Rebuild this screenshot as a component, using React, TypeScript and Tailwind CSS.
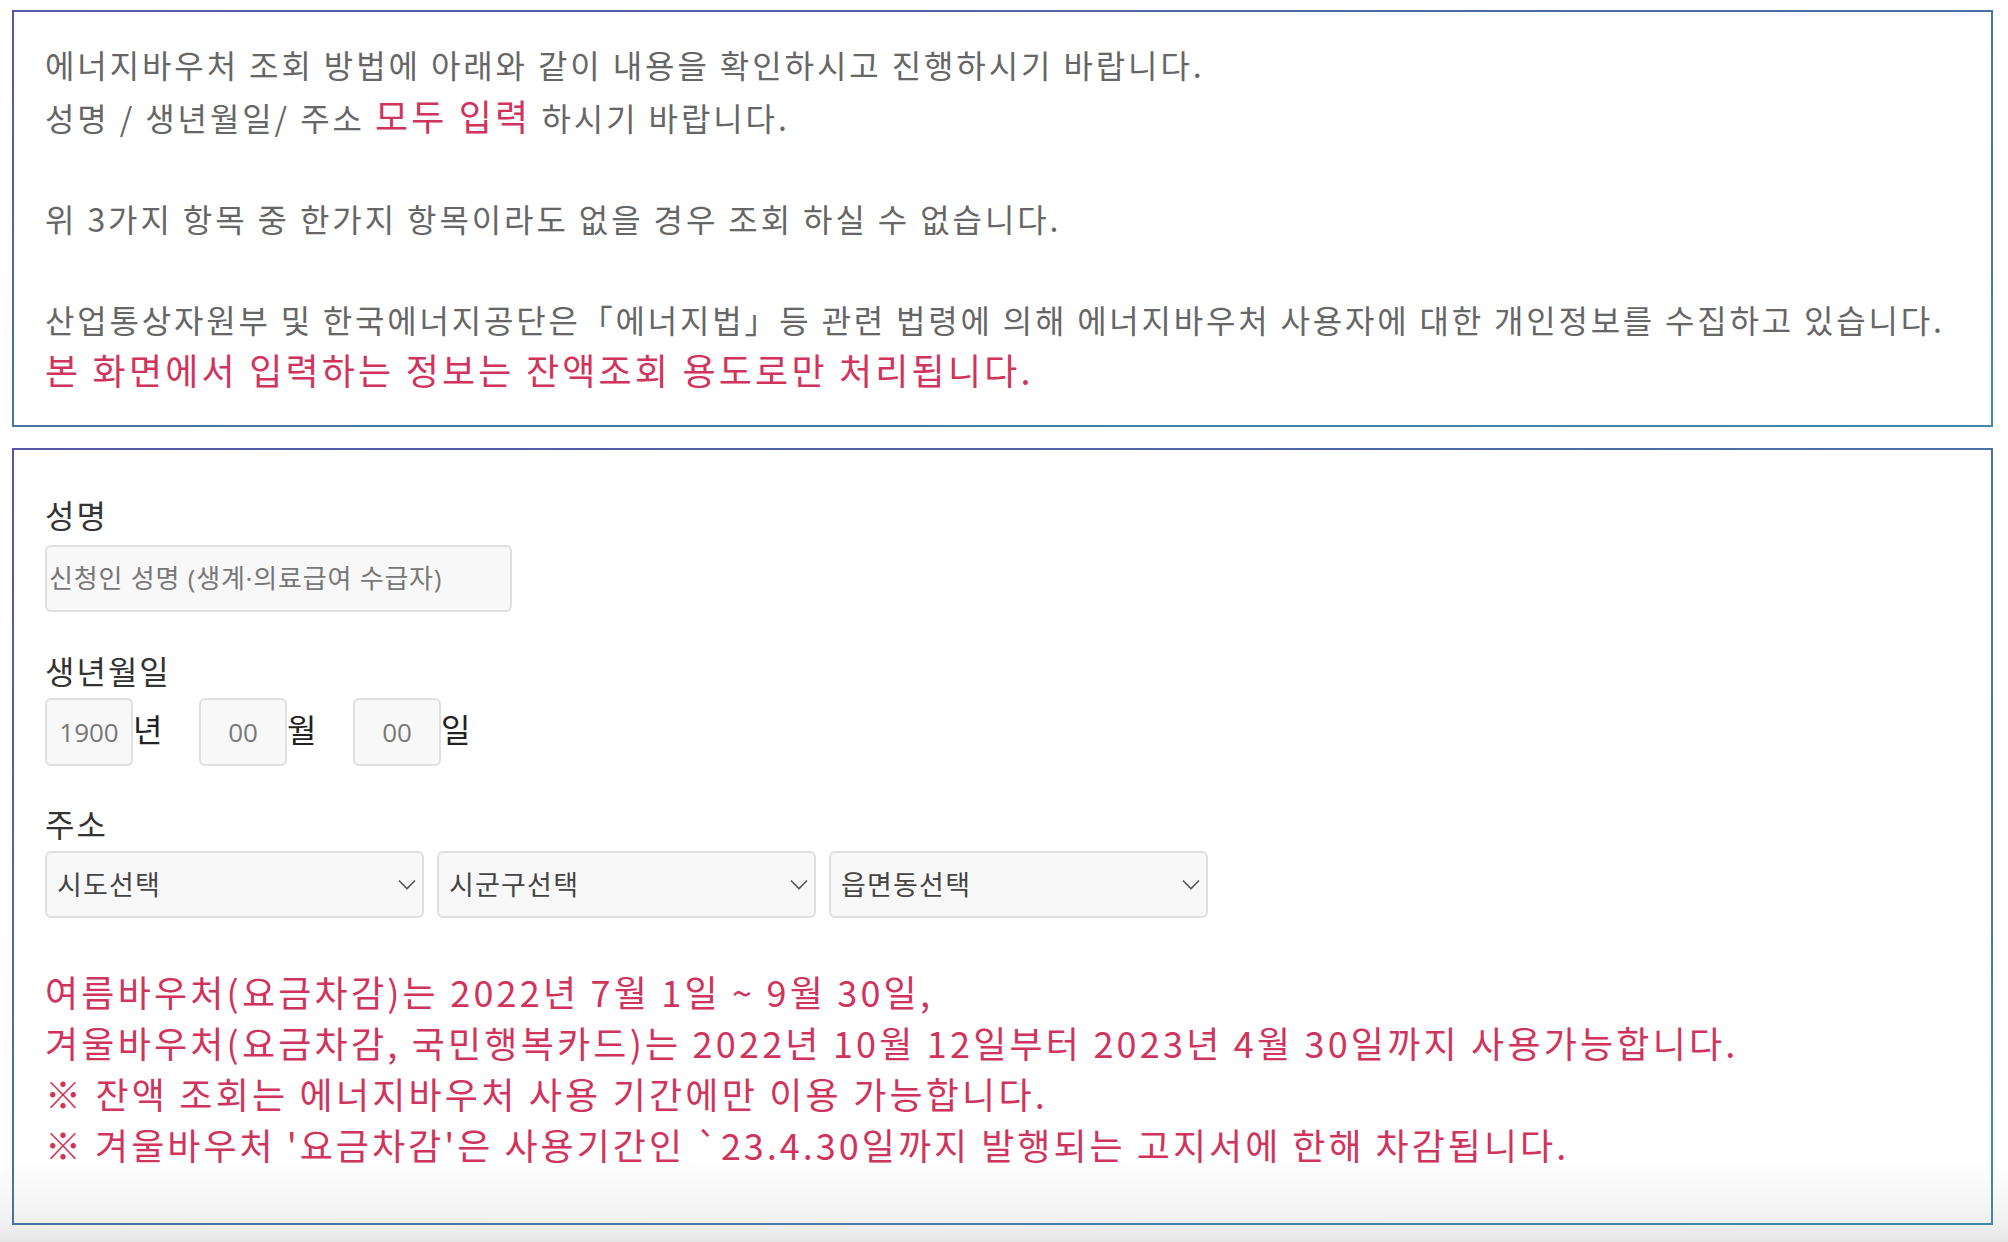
const red = 'text-[#d0345c]'

function Label({ children }: { children: React.ReactNode }) {
  return <div className="text-[32px] leading-[40px] tracking-[2px] text-[#333]">{children}</div>
}

function DatePart({ ph, unit }: { ph: string; unit: string }) {
  return (
    <div className="flex w-[154px] items-center">
      <input
        className="h-[68px] w-[88px] rounded-[6px] border-2 border-[#e0e0e0] bg-[#f8f8f8] text-center font-['Open_Sans','Noto_Sans_CJK_KR',sans-serif] text-[26px] text-[#777] outline-none placeholder:text-[#777]"
        placeholder={ph}
      />
      <span className="mb-[8px] text-[32px] leading-[40px] text-[#222]">{unit}</span>
    </div>
  )
}

function Select({ label }: { label: string }) {
  return (
    <div className="relative w-[379px]">
      <select className="h-[67px] w-full appearance-none rounded-[6px] border-2 border-[#e0e0e0] bg-[#f8f8f8] pl-[10px] text-[27px] tracking-[1.2px] text-[#444] outline-none">
        <option>{label}</option>
      </select>
      <svg className="pointer-events-none absolute right-[8px] top-[28px]" width="18" height="11" viewBox="0 0 18 11" fill="none">
        <path d="M1 1.5L9 9.5L17 1.5" stroke="#555" strokeWidth="1.6" />
      </svg>
    </div>
  )
}

export default function App() {
  return (
    <div className="h-[1242px] w-[2008px] overflow-hidden bg-[linear-gradient(#fff_1165px,#f0f0f0_1225px,#e5e5e5)] pl-[12px] pr-[15px] pt-[10px] font-['Noto_Sans_CJK_KR',sans-serif]">
      <div className="border-2 border-transparent pb-[28px] pl-[31px] pt-[27px] [background:linear-gradient(#fff,#fff)_padding-box,linear-gradient(to_bottom_right,#5558a8,#4289a6)_border-box]">
        <p className="whitespace-nowrap text-[32px] leading-[50.5px] tracking-[2.9px] text-[#666]">
          에너지바우처 조회 방법에 아래와 같이 내용을 확인하시고 진행하시기 바랍니다.
          <br />
          성명 / 생년월일/ 주소 <span className={`text-[36px] tracking-[3.2px] ${red}`}>모두 입력</span> 하시기 바랍니다.
          <br />
          <br />
          위 3가지 항목 중 한가지 항목이라도 없을 경우 조회 하실 수 없습니다.
          <br />
          <br />
          <span className="tracking-[2.8px]">
            산업통상자원부 및 한국에너지공단은「에너지법」등 관련 법령에 의해 에너지바우처 사용자에 대한 개인정보를 수집하고 있습니다.
          </span>
          <br />
          <span className={`text-[36px] tracking-[3.2px] ${red}`}>본 화면에서 입력하는 정보는 잔액조회 용도로만 처리됩니다.</span>
        </p>
      </div>

      <div className="mt-[21px] border-2 border-transparent pb-[53px] pl-[31px] pt-[44px] [background:linear-gradient(#fff_92%,#f0f0f0)_padding-box,linear-gradient(to_bottom_right,#5558a8,#4289a6)_border-box]">
        <Label>성명</Label>
        <input
          className="mt-[11px] h-[67px] w-[467px] rounded-[6px] border-2 border-[#e0e0e0] bg-[#f8f8f8] pl-[2px] font-['Open_Sans','Noto_Sans_CJK_KR',sans-serif] text-[26px] tracking-[0.8px] text-[#777] outline-none placeholder:text-[#777]"
          placeholder="신청인 성명 (생계·의료급여 수급자)"
        />

        <div className="mt-[38px]">
          <Label>생년월일</Label>
        </div>
        <div className="mt-[8px] flex">
          <DatePart ph="1900" unit="년" />
          <DatePart ph="00" unit="월" />
          <DatePart ph="00" unit="일" />
        </div>

        <div className="mt-[37px]">
          <Label>주소</Label>
        </div>
        <div className="mt-[8px] flex gap-[13px]">
          <Select label="시도선택" />
          <Select label="시군구선택" />
          <Select label="읍면동선택" />
        </div>

        <div className={`mt-[48px] whitespace-nowrap text-[36px] leading-[51px] tracking-[3.2px] ${red}`}>
          <div>여름바우처(요금차감)는 2022년 7월 1일 ~ 9월 30일,</div>
          <div>겨울바우처(요금차감, 국민행복카드)는 2022년 10월 12일부터 2023년 4월 30일까지 사용가능합니다.</div>
          <div>※ 잔액 조회는 에너지바우처 사용 기간에만 이용 가능합니다.</div>
          <div className="tracking-[3px]">※ 겨울바우처 '요금차감'은 사용기간인 `23.4.30일까지 발행되는 고지서에 한해 차감됩니다.</div>
        </div>
      </div>
    </div>
  )
}
